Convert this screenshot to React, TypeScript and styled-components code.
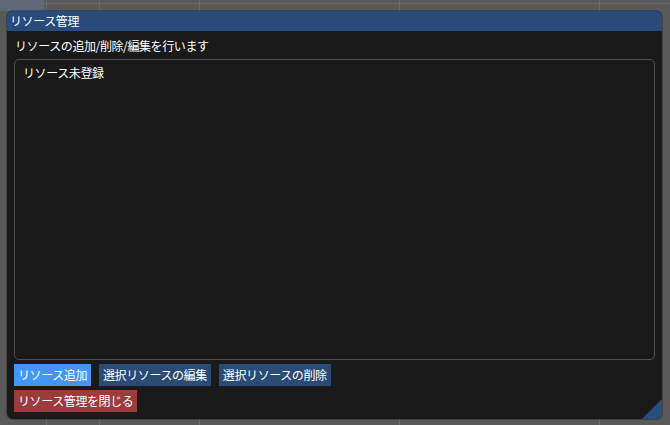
import React from 'react';
import styled, { createGlobalStyle } from 'styled-components';

const GlobalStyle = createGlobalStyle`
  html, body {
    margin: 0;
    padding: 0;
    width: 670px;
    height: 425px;
    overflow: hidden;
    background: #595959;
  }
  * {
    box-sizing: border-box;
  }
`;

const Desktop = styled.div`
  position: relative;
  width: 670px;
  height: 425px;
  padding: 11px 8px 6px 7px;
  background-color: #595959;
  background-image:
    linear-gradient(90deg, transparent 46px, #6b6b6b 46px, #6b6b6b 47px, transparent 47px),
    linear-gradient(90deg, transparent 99px, #6b6b6b 99px, #6b6b6b 100px, transparent 100px),
    repeating-linear-gradient(90deg, transparent 0, transparent 199px, #6b6b6b 199px, #6b6b6b 200px),
    linear-gradient(180deg, transparent 3px, #6b6b6b 3px, #6b6b6b 4px, transparent 4px);
  font-family: "Noto Sans CJK JP", "Noto Sans", sans-serif;
  font-size: 12px;
  letter-spacing: -0.4px;
  color: #ffffff;
`;

const CornerPanel = styled.div`
  position: absolute;
  left: 0;
  top: 0;
  width: 44px;
  height: 11px;
  background: #5e6878;
`;

const Window = styled.div`
  position: relative;
  height: 100%;
  display: flex;
  flex-direction: column;
  background: #1a1a1a;
  border-radius: 6px;
  box-shadow: 0 0 0 1px rgba(0, 0, 0, 0.25);
  overflow: hidden;
`;

const TitleBar = styled.div`
  height: 20px;
  flex: none;
  display: flex;
  align-items: center;
  padding: 0 3px;
  background: #294a7a;
  line-height: 20px;
`;

const Body = styled.div`
  flex: 1;
  display: flex;
  flex-direction: column;
  padding: 6px 7px 7px 7px;
  min-height: 0;
`;

const Description = styled.div`
  height: 18px;
  line-height: 18px;
  padding-left: 1px;
  margin-bottom: 4px;
`;

const ListBox = styled.div`
  flex: 1;
  border: 1px solid #4e4e54;
  border-radius: 5px;
  padding: 5px 8px;
  line-height: 16px;
`;

const ButtonRow = styled.div`
  display: flex;
  gap: 8px;
  margin-top: 4px;
`;

const Button = styled.button<{ $tone: 'active' | 'normal' | 'danger' }>`
  height: 22px;
  padding: 0 4px;
  border: none;
  border-radius: 0;
  font: inherit;
  letter-spacing: inherit;
  color: #ffffff;
  line-height: 22px;
  background: ${({ $tone }) =>
    $tone === 'active' ? '#4296fa' : $tone === 'danger' ? '#9c3b3b' : '#294b74'};
`;

const ResizeGrip = styled.svg`
  position: absolute;
  right: 0;
  bottom: 0;
  width: 20px;
  height: 20px;
`;

export default function App() {
  return (
    <>
      <GlobalStyle />
      <Desktop>
        <CornerPanel />
        <Window>
          <TitleBar>リソース管理</TitleBar>
          <Body>
            <Description>リソースの追加/削除/編集を行います</Description>
            <ListBox>リソース未登録</ListBox>
            <ButtonRow>
              <Button $tone="active">リソース追加</Button>
              <Button $tone="normal">選択リソースの編集</Button>
              <Button $tone="normal">選択リソースの削除</Button>
            </ButtonRow>
            <ButtonRow>
              <Button $tone="danger">リソース管理を閉じる</Button>
            </ButtonRow>
          </Body>
          <ResizeGrip viewBox="0 0 20 20">
            <polygon points="20,0 20,20 0,20" fill="#2b4f7c" />
          </ResizeGrip>
        </Window>
      </Desktop>
    </>
  );
}
